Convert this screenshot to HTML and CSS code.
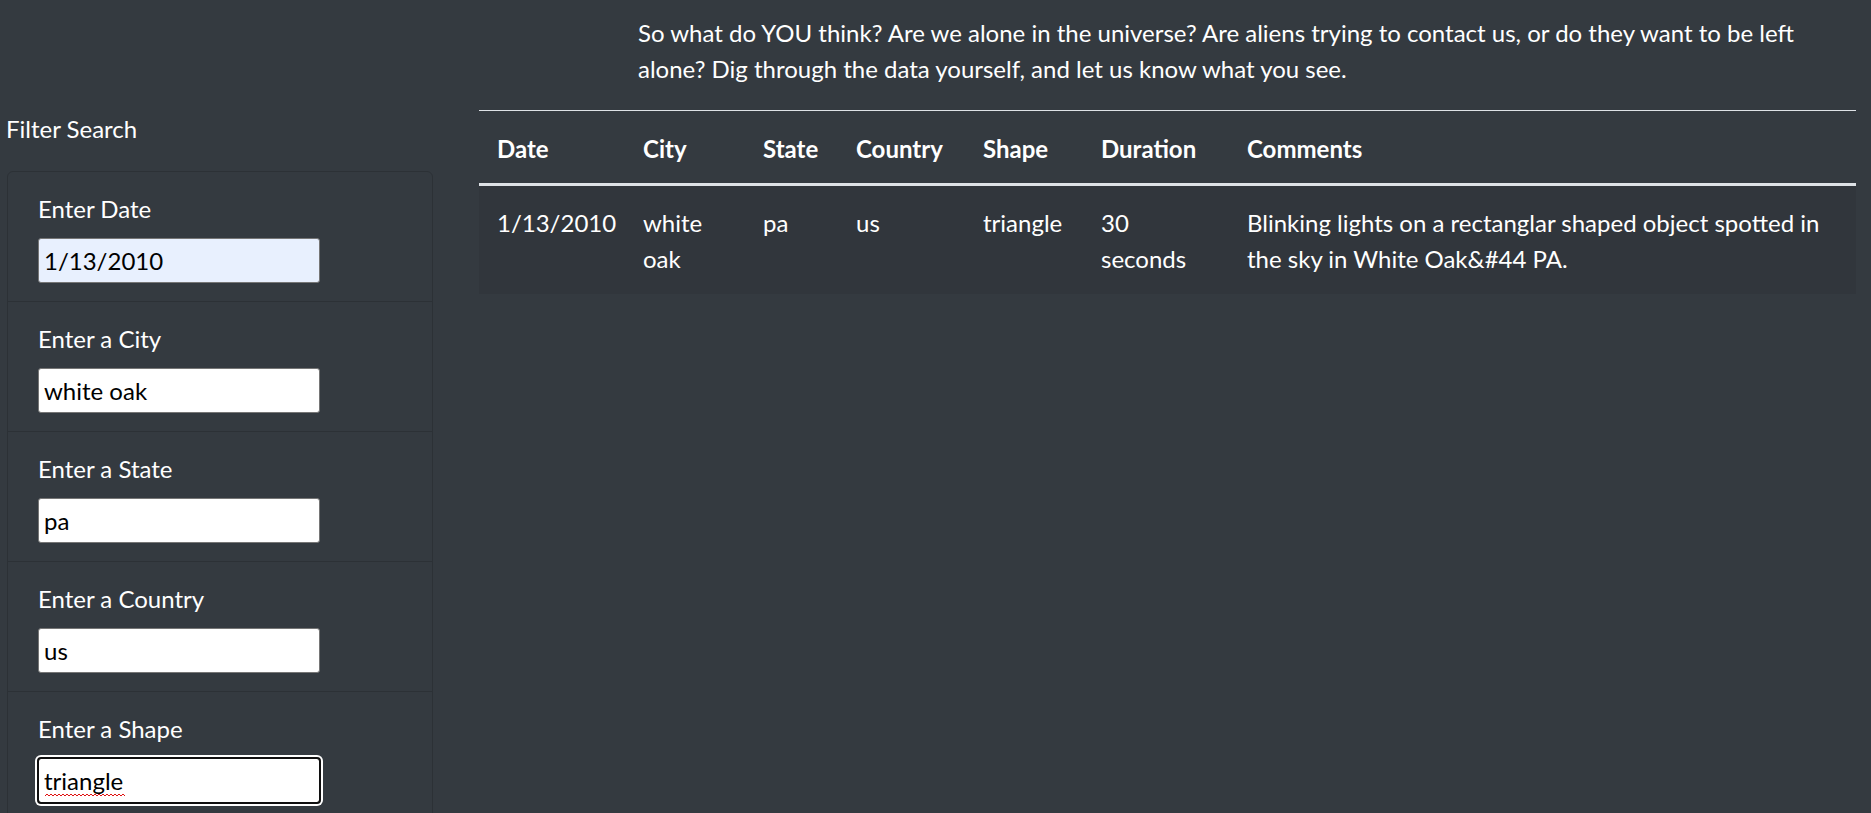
FILE: index.html
```html
<!DOCTYPE html>
<html lang="en">
<head>
<meta charset="utf-8">
<title>UFO Sightings</title>
<link rel="stylesheet" href="styles.css">
</head>
<body>
<div class="page">
  <aside class="sidebar">
    <div class="filter-title">Filter Search</div>
    <ul class="filters">
      <li class="filter">
        <label class="filter-label" for="datetime">Enter Date</label>
        <input class="filter-input autofilled" id="datetime" type="text" value="1/13/2010">
      </li>
      <li class="filter">
        <label class="filter-label" for="city">Enter a City</label>
        <input class="filter-input" id="city" type="text" value="white oak">
      </li>
      <li class="filter">
        <label class="filter-label" for="state">Enter a State</label>
        <input class="filter-input" id="state" type="text" value="pa">
      </li>
      <li class="filter">
        <label class="filter-label" for="country">Enter a Country</label>
        <input class="filter-input" id="country" type="text" value="us">
      </li>
      <li class="filter">
        <label class="filter-label" for="shape">Enter a Shape</label>
        <input class="filter-input focused" id="shape" type="text" value="triangle">
      </li>
    </ul>
  </aside>
  <main class="content">
    <p class="intro">So what do YOU think? Are we alone in the universe? Are aliens trying to contact us, or do they want to be left alone? Dig through the data yourself, and let us know what you see.</p>
    <table class="ufo-table">
      <colgroup>
        <col class="c-date"><col class="c-city"><col class="c-state"><col class="c-country"><col class="c-shape"><col class="c-duration"><col>
      </colgroup>
      <thead>
        <tr><th>Date</th><th>City</th><th>State</th><th>Country</th><th>Shape</th><th>Duration</th><th>Comments</th></tr>
      </thead>
      <tbody>
        <tr><td>1/13/2010</td><td>white oak</td><td>pa</td><td>us</td><td>triangle</td><td>30 seconds</td><td>Blinking lights on a rectanglar shaped object spotted in the sky in White Oak&amp;#44 PA.</td></tr>
      </tbody>
    </table>
  </main>
</div>
</body>
</html>
```
FILE: styles.css
```css
html, body {
  margin: 0;
  background: #343a40;
}
body {
  color: #fff;
  font-family: "Lato", "Liberation Sans", sans-serif;
  font-size: 24px;
  line-height: 36px;
  height: 813px;
  overflow: hidden;
}
.page {
  display: flex;
  align-items: flex-start;
}
.sidebar {
  width: 479px;
  flex: none;
  box-sizing: border-box;
  padding-top: 111px;
}
.filter-title {
  padding-left: 6px;
  margin-bottom: 24px;
}
.filters {
  list-style: none;
  margin: 0 0 0 7px;
  padding: 0;
  width: 426px;
  box-sizing: border-box;
  border: 1px solid #2c3136;
  border-radius: 6px;
}
.filter {
  padding: 19px 30px 18px;
  border-bottom: 1px solid #2c3136;
}
.filter-label {
  display: block;
  margin-bottom: 11px;
}
.filter-input {
  display: block;
  box-sizing: border-box;
  width: 282px;
  height: 45px;
  margin: 0;
  padding: 0 5px;
  border: 1px solid #767676;
  border-radius: 3px;
  background: #fff;
  color: #000;
  font-family: inherit;
  font-size: 24px;
}
.autofilled {
  background: #e8f0fe;
}
.focused {
  outline: 2px solid #101010;
  outline-offset: -1px;
  box-shadow: 0 0 0 3px #fff;
  background: #fff url("data:image/svg+xml;utf8,<svg xmlns='http://www.w3.org/2000/svg' width='80' height='4'><polyline points='0,3 2,1 4,3 6,1 8,3 10,1 12,3 14,1 16,3 18,1 20,3 22,1 24,3 26,1 28,3 30,1 32,3 34,1 36,3 38,1 40,3 42,1 44,3 46,1 48,3 50,1 52,3 54,1 56,3 58,1 60,3 62,1 64,3 66,1 68,3 70,1 72,3 74,1 76,3 78,1 80,3' fill='none' stroke='%23e01010' stroke-width='1'/></svg>") no-repeat 6px calc(100% - 5px);
}
.content {
  flex: 1;
  min-width: 0;
  padding: 15px 15px 0 0;
}
.intro {
  margin: 0 0 23px;
  padding-left: 159px;
}
.ufo-table {
  width: 100%;
  border-collapse: collapse;
  table-layout: fixed;
}
.c-date { width: 146px; }
.c-city { width: 120px; }
.c-state { width: 93px; }
.c-country { width: 127px; }
.c-shape { width: 118px; }
.c-duration { width: 146px; }
.ufo-table th {
  text-align: left;
  font-weight: 700;
  padding: 20px 18px 16px;
  vertical-align: bottom;
  border-top: 1px solid #dee2e6;
  border-bottom: 3px solid #dee2e6;
}
.ufo-table td {
  padding: 19px 18px 17px;
  vertical-align: top;
  background: #31363c;
}
```
